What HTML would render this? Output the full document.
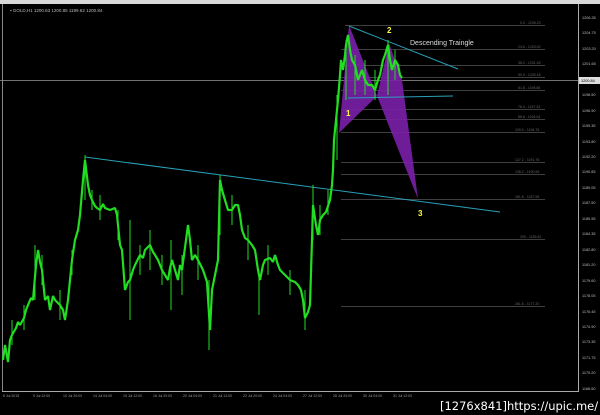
<!DOCTYPE html><html><head><style>
body{margin:0;width:600px;height:415px;background:#000;overflow:hidden;font-family:"Liberation Sans",sans-serif}
</style></head><body>
<svg width="600" height="415" xmlns="http://www.w3.org/2000/svg" style="position:absolute;left:0;top:0">
<rect width="600" height="415" fill="#000"/>
<rect x="0" y="0" width="600" height="4" fill="#d8d8d8"/>
<line x1="2.5" y1="4" x2="2.5" y2="391" stroke="#888" stroke-width="1"/>
<line x1="578.5" y1="4" x2="578.5" y2="391" stroke="#aaa" stroke-width="1"/>
<line x1="2" y1="391.5" x2="579" y2="391.5" stroke="#aaa" stroke-width="1"/>
<text x="10" y="12" fill="#bbb" font-size="4.5">▪ GOLD,H1  1200.63 1200.85 1199.62 1200.84</text>
<g stroke="#555" stroke-width="0.7">
<line x1="345" y1="25.5" x2="545" y2="25.5"/>
<line x1="341" y1="49.5" x2="545" y2="49.5"/>
<line x1="341" y1="65.5" x2="545" y2="65.5"/>
<line x1="341" y1="77.5" x2="545" y2="77.5"/>
<line x1="341" y1="90.5" x2="545" y2="90.5"/>
<line x1="341" y1="109.5" x2="545" y2="109.5"/>
<line x1="341" y1="119.5" x2="545" y2="119.5"/>
<line x1="341" y1="132.5" x2="545" y2="132.5"/>
<line x1="341" y1="162.5" x2="545" y2="162.5"/>
<line x1="341" y1="174.5" x2="545" y2="174.5"/>
<line x1="341" y1="199.5" x2="545" y2="199.5"/>
<line x1="341" y1="239.5" x2="545" y2="239.5"/>
<line x1="341" y1="306.5" x2="545" y2="306.5"/>
</g>
<line x1="0" y1="80.5" x2="578" y2="80.5" stroke="#999" stroke-width="0.7"/>
<g fill="#666" font-size="3.5">
<text x="520" y="24">0.0 - 1206.23</text><text x="518" y="48">23.6 - 1203.02</text>
<text x="518" y="64">38.2 - 1201.45</text><text x="518" y="76">50.0 - 1200.18</text>
<text x="518" y="89">61.8 - 1198.88</text><text x="518" y="108">76.4 - 1197.32</text>
<text x="518" y="118">88.6 - 1196.04</text><text x="515" y="131">100.0 - 1194.76</text>
<text x="515" y="161">127.2 - 1191.76</text><text x="515" y="173">138.2 - 1190.59</text>
<text x="515" y="198">161.8 - 1187.95</text><text x="520" y="238">200 - 1183.81</text>
<text x="515" y="305">261.8 - 1177.20</text>
</g>
<polygon points="349,25 339,133 377,96" fill="#7b1fa8" opacity="0.9"/>
<polygon points="377,96 389,43 402,80 418,199" fill="#7b1fa8" opacity="0.9"/>
<g stroke="#2aa0b8" stroke-width="1">
<line x1="349" y1="26" x2="458" y2="69"/>
<line x1="348" y1="98" x2="453" y2="96"/>
<line x1="85" y1="157" x2="500" y2="212"/>
</g>
<g fill="none" stroke="#22dd22" stroke-width="2.2" stroke-linejoin="bevel">
<polyline points="3,360 5,345 8,362 10,340 12,335 16,328 18,322 20,325 24,318 26,310 28,305 31,298 33,300 36,265 38,250 40,262 42,270 45,300 48,296 50,310 53,296 55,300 60,305 63,310 65,320 68,300 70,280 72,260 75,240 78,230 80,215 83,180 85,160 88,185 90,195 92,200 95,206 97,208 100,210 103,204 105,208 110,210 115,208 117,215 120,245 122,250 125,290 128,282 130,280 133,270 135,265 140,255 143,258 145,250 150,245 153,252 155,255 158,260 162,270 165,275 168,280 170,268 172,260 175,270 178,280 180,265 182,270 186,240 188,225 190,240 192,260 195,255 198,260 200,264 203,270 207,282 210,330 212,290 216,270 218,260 220,180 222,190 225,200 228,210 232,210 235,205 238,205 240,215 242,230 245,238 248,240 252,245 255,250 258,270 260,280 263,265 265,260 270,258 273,262 275,255 278,265 280,270 285,275 290,280 295,282 298,285 301,290 303,300 305,318 308,312 310,305 312,240 313,205 316,225 318,235 320,220 323,215 326,212 330,200 332,185 333,170 334,140 335,130 337,110 338,100 340,75 341,60 343,70 345,55 346,45 348,35 350,50 352,60 355,65 358,80 362,70 365,80 368,85 372,85 375,90 378,80 380,75 383,60 385,55 388,45 390,60 392,70 395,60 398,65 400,75 402,78"/>
</g>
<g stroke="#22dd22" stroke-width="1">
<line x1="130" y1="220" x2="130" y2="320"/><line x1="209" y1="280" x2="209" y2="350"/><line x1="305" y1="290" x2="305" y2="330"/>
<line x1="259" y1="270" x2="259" y2="315"/><line x1="171" y1="240" x2="171" y2="310"/><line x1="337" y1="95" x2="337" y2="160"/>
<line x1="346" y1="40" x2="346" y2="100"/><line x1="355" y1="55" x2="355" y2="95"/><line x1="388" y1="40" x2="388" y2="95"/>
<line x1="35" y1="245" x2="35" y2="300"/><line x1="85" y1="155" x2="85" y2="200"/><line x1="220" y1="175" x2="220" y2="235"/>
<line x1="313" y1="185" x2="313" y2="240"/><line x1="150" y1="230" x2="150" y2="270"/><line x1="100" y1="195" x2="100" y2="220"/>
<line x1="12" y1="320" x2="12" y2="345"/><line x1="24" y1="305" x2="24" y2="330"/><line x1="42" y1="255" x2="42" y2="285"/>
<line x1="60" y1="290" x2="60" y2="320"/><line x1="72" y1="250" x2="72" y2="275"/><line x1="92" y1="190" x2="92" y2="210"/>
<line x1="118" y1="210" x2="118" y2="240"/><line x1="140" y1="245" x2="140" y2="275"/><line x1="162" y1="255" x2="162" y2="285"/>
<line x1="182" y1="255" x2="182" y2="295"/><line x1="198" y1="245" x2="198" y2="280"/><line x1="232" y1="195" x2="232" y2="225"/>
<line x1="248" y1="225" x2="248" y2="260"/><line x1="268" y1="245" x2="268" y2="275"/><line x1="290" y1="270" x2="290" y2="295"/>
<line x1="320" y1="205" x2="320" y2="235"/><line x1="328" y1="190" x2="328" y2="215"/><line x1="365" y1="60" x2="365" y2="95"/>
<line x1="375" y1="70" x2="375" y2="100"/><line x1="395" y1="50" x2="395" y2="80"/>
</g>
<text x="346" y="116" fill="#ffff40" font-size="8" font-weight="bold">1</text>
<text x="387" y="33" fill="#ffff40" font-size="8" font-weight="bold">2</text>
<text x="418" y="216" fill="#ffff40" font-size="8" font-weight="bold">3</text>
<text x="410" y="45" fill="#ddd" font-size="7">Descending Traingle</text>
<g fill="#bbb" font-size="3.8">
<text x="582" y="19">1206.35</text><text x="582" y="34">1204.75</text><text x="582" y="50">1203.20</text><text x="582" y="65">1201.65</text>
<text x="582" y="96">1198.50</text><text x="582" y="112">1196.90</text><text x="582" y="127">1195.35</text><text x="582" y="143">1193.80</text>
<text x="582" y="158">1192.20</text><text x="582" y="173">1190.65</text><text x="582" y="189">1189.05</text><text x="582" y="204">1187.50</text>
<text x="582" y="220">1185.95</text><text x="582" y="235">1184.35</text><text x="582" y="251">1182.80</text><text x="582" y="266">1181.20</text>
<text x="582" y="282">1179.60</text><text x="582" y="297">1178.05</text><text x="582" y="313">1176.45</text><text x="582" y="328">1174.90</text>
<text x="582" y="343">1173.35</text><text x="582" y="359">1171.75</text><text x="582" y="374">1170.20</text><text x="582" y="390">1168.60</text>
</g>
<rect x="579" y="77" width="21" height="7" fill="#ddd"/>
<text x="581" y="82" fill="#000" font-size="3.8">1200.84</text>
<g fill="#999" font-size="3.5">
<text x="3" y="397">8 Jul 2015</text><text x="33" y="397">9 Jul 12:00</text><text x="63" y="397">10 Jul 20:00</text><text x="93" y="397">14 Jul 04:00</text>
<text x="123" y="397">15 Jul 12:00</text><text x="153" y="397">16 Jul 20:00</text><text x="183" y="397">20 Jul 04:00</text><text x="213" y="397">21 Jul 12:00</text>
<text x="243" y="397">22 Jul 20:00</text><text x="273" y="397">24 Jul 04:00</text><text x="303" y="397">27 Jul 12:00</text><text x="333" y="397">28 Jul 20:00</text>
<text x="363" y="397">30 Jul 04:00</text><text x="393" y="397">31 Jul 12:00</text>
</g>
<text x="440" y="410" fill="#fff" font-size="11.5" font-family="DejaVu Sans, sans-serif">[1276x841]https://upic.me/</text>
</svg>
</body></html>
